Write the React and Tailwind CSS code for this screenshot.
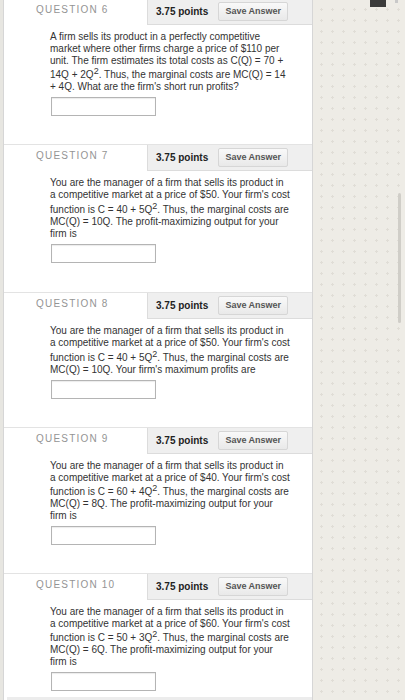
import React from "react";

const Sup = ({ children }) => (
  <sup className="text-[9px] relative -top-[4.5px] leading-none">{children}</sup>
);

function Question({ num, lines, supLine, supPad, bottom, first }) {
  return (
    <div className={first ? "-mt-[2px] border-t border-[#e3e3e3]" : "border-t border-[#e3e3e3]"}>
      <div className="flex h-[26px]">
        <div className="w-[143px] pl-[32px] pt-[5px] text-[10px] leading-[12px] tracking-[1.2px] text-[#949494]">
          QUESTION {num}
        </div>
        <div className="flex-1 flex items-center pl-[8px] bg-[#efefef] border-l border-b border-[#dcdcdc]">
          <span className="text-[10px] font-bold text-[#222] leading-none">3.75 points</span>
          <button className="ml-[10px] w-[70px] h-[19px] flex items-center justify-center rounded-[2px] border border-[#d6d6d6] bg-gradient-to-b from-[#f9f9f9] to-[#e9e9e9] text-[9px] font-bold text-[#555] leading-none">
            Save Answer
          </button>
        </div>
      </div>
      <div className="pl-[46px] pt-[6px] text-[10px] text-[#333]">
        {lines.map((l, i) => (
          <div
            key={i}
            className={
              i === supLine
                ? supPad === 3
                  ? "pt-[3px] leading-[12px] whitespace-nowrap"
                  : "pt-[2px] leading-[12px] whitespace-nowrap"
                : "leading-[12px] whitespace-nowrap"
            }
          >
            {l}
          </div>
        ))}
        <div className="mt-[4px] ml-[1px] w-[105px] h-[19px] border border-[#b4b4b4] bg-white shadow-[inset_0_1px_1px_rgba(0,0,0,0.08)]" />
      </div>
      {bottom === 29 ? <div className="h-[29px]" /> : bottom === 7 ? <div className="h-[6px]" /> : <div className="h-[28px]" />}
    </div>
  );
}

export default function App() {
  const qs = [
    {
      num: 6,
      supLine: 3,
      supPad: 2,
      bottom: 28,
      lines: [
        "A firm sells its product in a perfectly competitive",
        "market where other firms charge a price of $110 per",
        "unit. The firm estimates its total costs as C(Q) = 70 +",
        <>14Q + 2Q<Sup>2</Sup>. Thus, the marginal costs are MC(Q) = 14</>,
        "+ 4Q. What are the firm's short run profits?",
      ],
    },
    {
      num: 7,
      supLine: 2,
      supPad: 3,
      bottom: 29,
      lines: [
        "You are the manager of a firm that sells its product in",
        "a competitive market at a price of $50. Your firm's cost",
        <>function is C = 40 + 5Q<Sup>2</Sup>. Thus, the marginal costs are</>,
        "MC(Q) = 10Q. The profit-maximizing output for your",
        "firm is",
      ],
    },
    {
      num: 8,
      supLine: 2,
      supPad: 3,
      bottom: 28,
      lines: [
        "You are the manager of a firm that sells its product in",
        "a competitive market at a price of $50. Your firm's cost",
        <>function is C = 40 + 5Q<Sup>2</Sup>. Thus, the marginal costs are</>,
        "MC(Q) = 10Q. Your firm's maximum profits are",
      ],
    },
    {
      num: 9,
      supLine: 2,
      supPad: 2,
      bottom: 28,
      lines: [
        "You are the manager of a firm that sells its product in",
        "a competitive market at a price of $40. Your firm's cost",
        <>function is C = 60 + 4Q<Sup>2</Sup>. Thus, the marginal costs are</>,
        "MC(Q) = 8Q. The profit-maximizing output for your",
        "firm is",
      ],
    },
    {
      num: 10,
      supLine: 2,
      supPad: 2,
      bottom: 7,
      lines: [
        "You are the manager of a firm that sells its product in",
        "a competitive market at a price of $60. Your firm's cost",
        <>function is C = 50 + 3Q<Sup>2</Sup>. Thus, the marginal costs are</>,
        "MC(Q) = 6Q. The profit-maximizing output for your",
        "firm is",
      ],
    },
  ];

  return (
    <div className="flex w-[405px] h-[700px] overflow-hidden bg-[#eeece6] font-['Liberation_Sans',Arial,sans-serif]">
      <div className="w-[3px] shrink-0 bg-[#e7e6e1]" />
      <div className="w-[310px] shrink-0 bg-white border-l border-r border-[#d6d6d6] flex flex-col">
        {qs.map((q, i) => (
          <Question key={q.num} {...q} first={i === 0} />
        ))}
        <div className="ml-[3px] h-[6px] bg-[#ececec]" />
      </div>
      <div className="relative flex-1 bg-[radial-gradient(circle,#e0ddd6_1px,transparent_1.4px)] bg-size-[11px_11px] bg-position-[3px_4px]">
        <div className="absolute left-[57px] top-0 w-[16px] h-[7px] bg-[#3b3b3b]" />
        <div className="absolute left-[82px] top-0 w-[3px] h-[3px] bg-[#c9c9c9]" />
        <div className="absolute left-[85px] top-[193px] w-[3px] h-[130px] rounded-full bg-[#d0cec8]" />
      </div>
    </div>
  );
}
